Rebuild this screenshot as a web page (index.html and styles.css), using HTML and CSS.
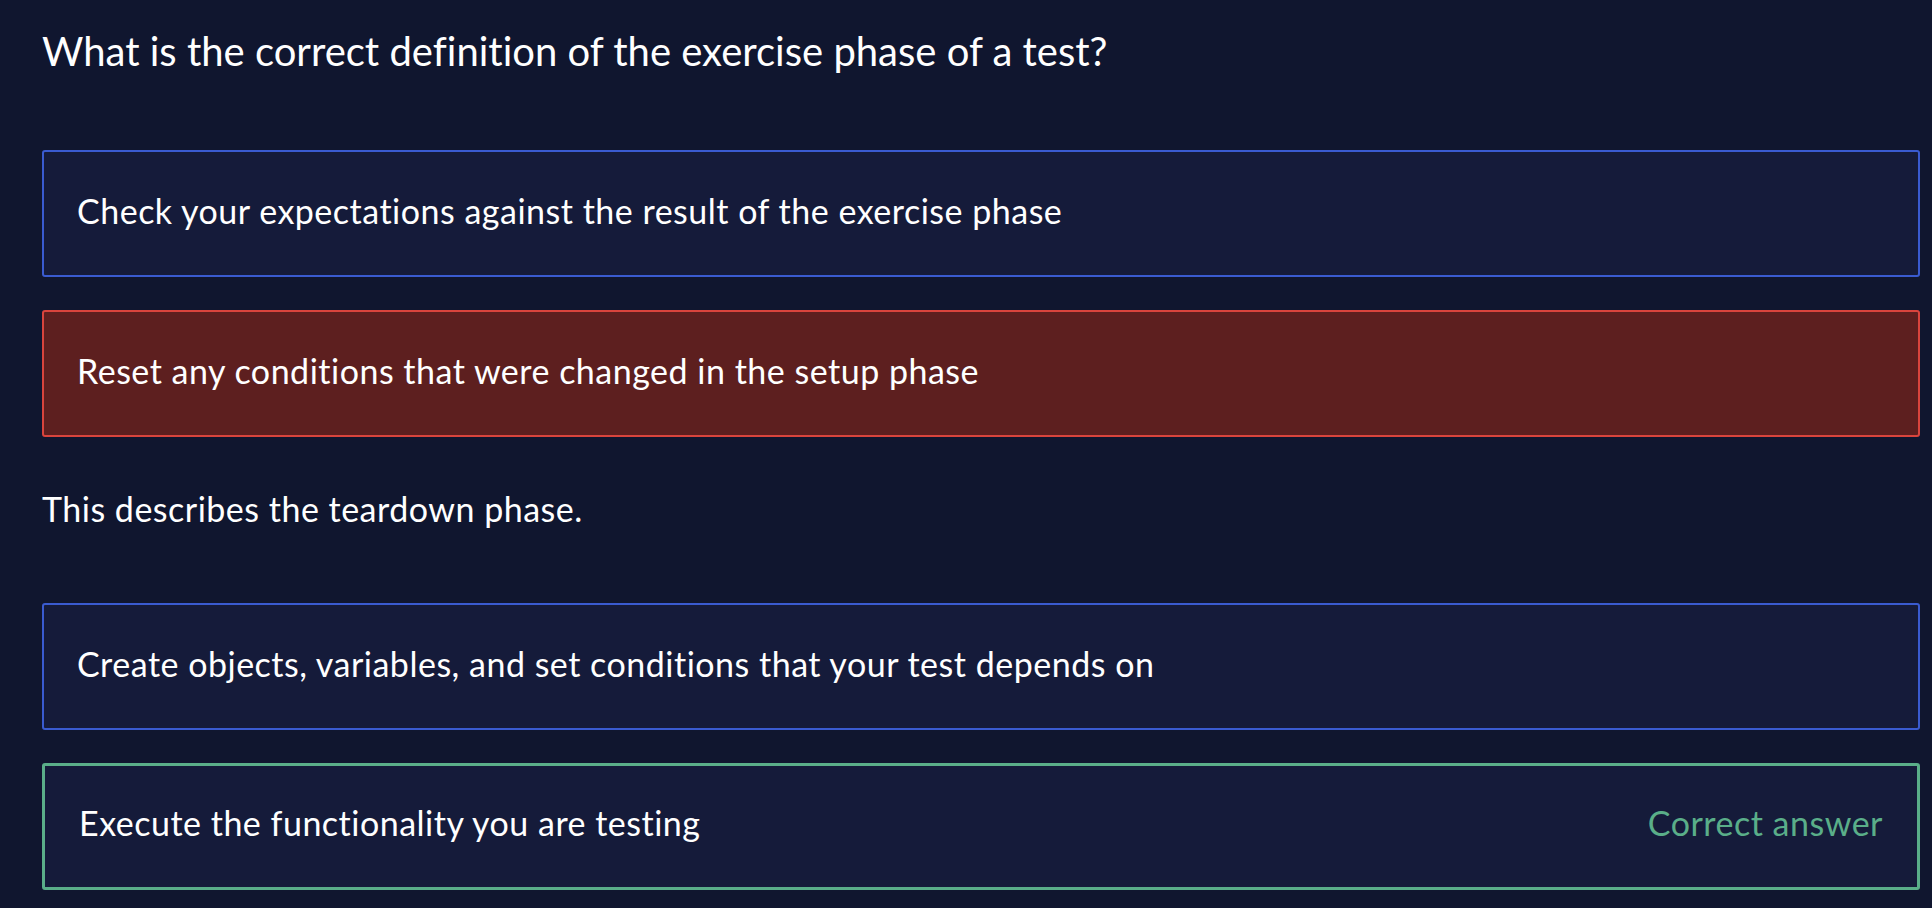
FILE: index.html
```html
<!DOCTYPE html>
<html lang="en">
<head>
<meta charset="utf-8">
<title>Quiz</title>
<link rel="stylesheet" href="styles.css">
</head>
<body>
<main class="quiz">
  <h1 class="question">What is the correct definition of the exercise phase of a test?</h1>
  <div class="options">
    <div class="option">Check your expectations against the result of the exercise phase</div>
    <div class="option option--wrong">Reset any conditions that were changed in the setup phase</div>
    <p class="feedback">This describes the teardown phase.</p>
    <div class="option">Create objects, variables, and set conditions that your test depends on</div>
    <div class="option option--correct">
      <span>Execute the functionality you are testing</span>
      <span class="correct-label">Correct answer</span>
    </div>
  </div>
</main>
</body>
</html>
```

FILE: styles.css
```css
html, body {
  margin: 0;
  padding: 0;
  background: #10162f;
}

body {
  font-family: Lato, "Open Sans", sans-serif;
  color: #ffffff;
  font-variant-ligatures: no-common-ligatures;
}

.quiz {
  padding: 0 12px 0 42px;
}

.question {
  margin: 0;
  padding-top: 27px;
  height: 150px;
  box-sizing: border-box;
  font-size: 40px;
  font-weight: 400;
  line-height: 48px;
}

.options {
  display: flex;
  flex-direction: column;
  gap: 33px;
}

.option {
  box-sizing: border-box;
  height: 127px;
  display: flex;
  align-items: center;
  justify-content: space-between;
  padding: 0 34px 6px 33px;
  background: #151b3a;
  border: 2px solid #3a5bd0;
  border-radius: 3px;
  font-size: 34px;
  line-height: 40px;
  letter-spacing: 0.5px;
}

.option--wrong {
  background: #5d1f1f;
  border-color: #d9443d;
}

.option--correct {
  border: 3px solid #5aae89;
  padding-left: 34px;
  padding-bottom: 8px;
}

.correct-label {
  color: #5aae89;
}

.feedback {
  box-sizing: border-box;
  margin: 0;
  height: 100px;
  padding-top: 19px;
  font-size: 34px;
  line-height: 40px;
  letter-spacing: 0.5px;
}
```
